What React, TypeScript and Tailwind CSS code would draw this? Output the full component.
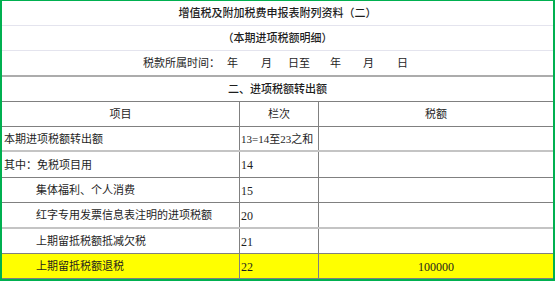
import React from "react";

const font = { fontFamily: '"Liberation Serif", "Noto Sans CJK SC", serif' };

type Row = { label: string; indent?: boolean; code: string; amount?: string; h: string; b: string; yellow?: boolean };

const rows: Row[] = [
  { label: "本期进项税额转出额", code: "13=14至23之和", h: "h-[25px]", b: "border-b-2 border-[#c4c4c4]" },
  { label: "其中：免税项目用", code: "14", h: "h-[26px]", b: "border-b border-[#808080]" },
  { label: "集体福利、个人消费", indent: true, code: "15", h: "h-[25px]", b: "border-b border-[#808080]" },
  { label: "红字专用发票信息表注明的进项税额", indent: true, code: "20", h: "h-[26px]", b: "border-b-2 border-[#c4c4c4]" },
  { label: "上期留抵税额抵减欠税", indent: true, code: "21", h: "h-[25px]", b: "border-b border-[#808080]" },
  { label: "上期留抵税额退税", indent: true, code: "22", amount: "100000", h: "h-[25px]", b: "border-b border-[#808080]", yellow: true },
];

export default function App() {
  return (
    <div className="w-[555px] h-[282px] bg-white overflow-hidden">
      <div
        className="w-[555px] h-[281px] border-t border-l-2 border-r-2 border-b-2 border-[#00b050] flex flex-col text-[11px] leading-none text-[#1e1e1e]"
        style={font}
      >
        <div className="h-[25px] shrink-0 border-b border-[#e4e4ee] flex items-center justify-center font-medium">
          增值税及附加税费申报表附列资料（二）
        </div>
        <div className="h-[25px] shrink-0 border-b border-[#e4e4ee] flex items-center justify-center font-medium">
          （本期进项税额明细）
        </div>
        <div className="h-[26px] shrink-0 border-b-2 border-[#acacac] flex items-center pl-[141px]">
          <span>税款所属时间：</span>
          <span className="ml-[7px]">年</span>
          <span className="ml-[23px]">月</span>
          <span className="ml-[16px]">日至</span>
          <span className="ml-[20px]">年</span>
          <span className="ml-[22px]">月</span>
          <span className="ml-[23px]">日</span>
        </div>
        <div className="h-[25px] shrink-0 border-b border-[#808080] flex items-center justify-center font-medium">
          二、进项税额转出额
        </div>
        <div className="h-[25px] shrink-0 border-b border-[#808080] grid grid-cols-[238px_79px_1fr]">
          <div className="border-r border-[#808080] flex items-center justify-center">项目</div>
          <div className="border-r border-[#808080] flex items-center justify-center">栏次</div>
          <div className="flex items-center justify-center">税额</div>
        </div>
        {rows.map((r, i) => (
          <div
            key={i}
            className={`${r.h} shrink-0 ${r.b} grid grid-cols-[238px_79px_1fr] ${r.yellow ? "bg-[#ffff00]" : ""}`}
          >
            <div className={`border-r border-[#808080] flex items-center pt-[1px] whitespace-nowrap ${r.indent ? "pl-[34px]" : "pl-[2px]"}`}>
              {r.label}
            </div>
            <div className="border-r border-[#808080] flex items-center pl-[1px] pt-[1px] text-[12px] whitespace-nowrap overflow-hidden">
              <span className={r.code.length > 3 ? "text-[11px]" : ""}>{r.code}</span>
            </div>
            <div className="flex items-center justify-center pt-[1px] text-[12px]">{r.amount}</div>
          </div>
        ))}
      </div>
    </div>
  );
}
